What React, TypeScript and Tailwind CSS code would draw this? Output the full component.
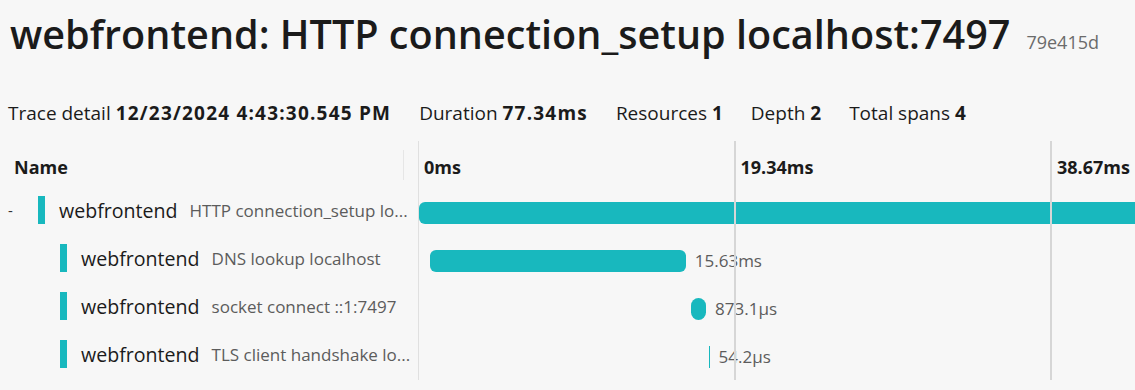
import React from 'react';

const PX_PER_MS = 316.5 / 19.335;

const spans = [
  { depth: 0, service: 'webfrontend', name: 'HTTP connection_setup lo...', start: 0.06, duration: 77.34, label: '' },
  { depth: 1, service: 'webfrontend', name: 'DNS lookup localhost', start: 0.73, duration: 15.63, label: '15.63ms' },
  { depth: 1, service: 'webfrontend', name: 'socket connect ::1:7497', start: 16.68, duration: 0.92, label: '873.1µs' },
  { depth: 1, service: 'webfrontend', name: 'TLS client handshake lo...', start: 17.75, duration: 0.06, label: '54.2µs' },
];

const ticks = ['0ms', '19.34ms', '38.67ms'];

const App = () => {
  return (
    <div
      className="w-[1135px] h-[390px] overflow-hidden bg-[#f7f7f7] text-[#1b1b1b]"
      style={{ fontFamily: '"Open Sans", "Noto Sans", sans-serif' }}
    >
      <div className="flex items-baseline gap-4 pl-[10px] pt-[8px] h-[70px]">
        <h1 className="text-[39.6px] font-semibold leading-[52px] whitespace-nowrap">
          webfrontend: HTTP connection_setup localhost:7497
        </h1>
        <span className="text-[18px] text-[#6b6b6b]">79e415d</span>
      </div>

      <div className="flex items-center gap-[28px] pl-[8px] mt-[28px] h-[30px] text-[19px] whitespace-nowrap">
        <span>Trace detail <b className="font-bold tracking-[1.2px]">12/23/2024 4:43:30.545 PM</b></span>
        <span>Duration <b className="font-bold tracking-[1.2px]">77.34ms</b></span>
        <span>Resources <b className="font-bold">1</b></span>
        <span>Depth <b className="font-bold">2</b></span>
        <span>Total spans <b className="font-bold">4</b></span>
      </div>

      <div className="relative mt-[13px]">
        {/* grid lines over the timeline */}
        <div className="absolute left-[418px] top-0 h-[239px] w-px bg-[#e0e0e0]" />
        <div className="absolute left-[734px] top-0 h-[239px] w-[2px] bg-[#d6d6d6] z-10" />
        <div className="absolute left-[1050px] top-0 h-[239px] w-[2px] bg-[#d6d6d6] z-10" />

        <div className="flex h-[45px] items-center pt-[8px]">
          <div className="relative w-[418px] shrink-0 h-full flex items-center pl-[14px]">
            <span className="text-[18px] font-bold">Name</span>
            <div className="absolute left-[403px] top-[1px] h-[30px] w-px bg-[#e6e6e6]" />
          </div>
          <div className="flex">
            {ticks.map((t) => (
              <div key={t} className="w-[316.5px] shrink-0 pl-[6px] text-[18px] font-bold whitespace-nowrap">
                {t}
              </div>
            ))}
          </div>
        </div>

        {spans.map((s, i) => {
          const left = s.start * PX_PER_MS;
          const width = Math.max(s.duration * PX_PER_MS, 1);
          const isDot = width < 20 && width > 2;
          return (
            <div key={i} className="flex h-[48px] items-center">
              <div className="w-[418px] shrink-0 flex items-center whitespace-nowrap overflow-hidden">
                {s.depth === 0 ? (
                  <span className="w-[38px] shrink-0 pl-[8px] text-[15px] text-[#333]">-</span>
                ) : (
                  <span className="w-[60px] shrink-0" />
                )}
                <span className="w-[7px] h-[28px] bg-[#18b8be] shrink-0" />
                <span className="ml-[14px] text-[19.6px] text-[#1b1b1b] pt-[2px]">{s.service}</span>
                <span className="ml-[12px] text-[17px] text-[#5c5c5c] pt-[2px]">{s.name}</span>
              </div>
              <div className="flex-1 flex items-center h-[22px] mt-[5px]">
                <div className="shrink-0" style={{ width: left }} />
                {width <= 2 ? (
                  <div className="w-px h-[22px] bg-[#18b8be] shrink-0" />
                ) : (
                  <div
                    className={isDot ? 'h-[22px] bg-[#18b8be] rounded-[8px] shrink-0' : 'h-[22px] bg-[#18b8be] rounded-[6px] shrink-0'}
                    style={{ width }}
                  />
                )}
                {s.label && (
                  <span className="ml-[9px] text-[17px] text-[#5c5c5c] whitespace-nowrap">{s.label}</span>
                )}
              </div>
            </div>
          );
        })}
      </div>
    </div>
  );
};

export default App;
